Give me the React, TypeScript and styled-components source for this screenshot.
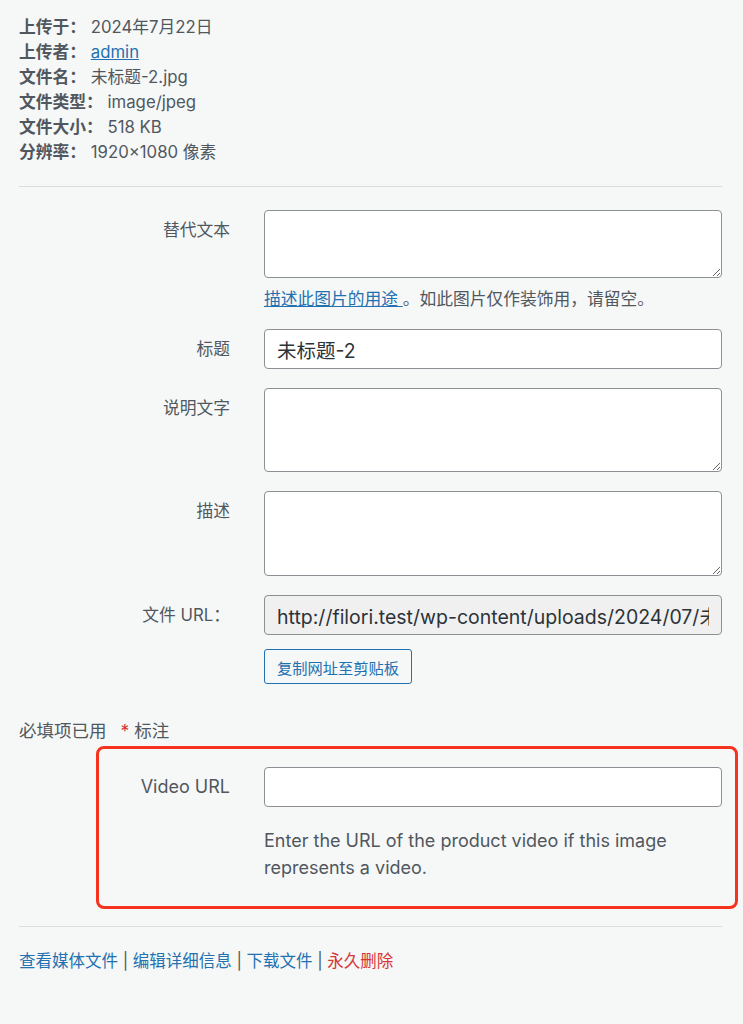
import styled, { createGlobalStyle } from "styled-components";

const GlobalStyle = createGlobalStyle`
  html, body {
    margin: 0;
    padding: 0;
    background: #f6f7f7;
  }
  body {
    font-family: Inter, "Noto Sans CJK SC", sans-serif;
    color: #50575e;
  }
`;

const Page = styled.div`
  padding: 15px 21px 40px 19px;
`;

const MetaList = styled.div`
  display: flex;
  flex-direction: column;
  font-size: 16.75px;
  line-height: 25px;
  color: #50575e;
`;

const MetaLabel = styled.strong`
  font-weight: 600;
  color: #50575e;
`;

const Link = styled.a<{ $danger?: boolean }>`
  color: ${(p) => (p.$danger ? "#d63638" : "#2271b1")};
  text-decoration: underline;
`;

const Divider = styled.hr`
  border: 0;
  border-top: 1px solid #dcdcde;
  margin: 21px 0 0;
`;

const Fields = styled.div`
  display: flex;
  flex-direction: column;
  gap: 19px;
  padding-top: 23px;
`;

const Row = styled.div<{ $labelWidth?: number }>`
  display: grid;
  grid-template-columns: ${(p) => p.$labelWidth ?? 211}px 458px;
  column-gap: 34px;
  align-items: start;
`;

const Label = styled.label<{ $size?: number }>`
  text-align: right;
  font-size: ${(p) => p.$size ?? 16.75}px;
  line-height: 20px;
  padding-top: 10px;
  color: #50575e;
`;

const Control = styled.div`
  display: flex;
  flex-direction: column;
`;

const TextArea = styled.textarea<{ $h: number }>`
  box-sizing: border-box;
  width: 100%;
  height: ${(p) => p.$h}px;
  margin: 0;
  border: 1px solid #8c8f94;
  border-radius: 4px;
  background: #fff;
  font: inherit;
  resize: vertical;
  display: block;
`;

const TextInput = styled.input<{ $readOnly?: boolean }>`
  box-sizing: border-box;
  width: 100%;
  height: 40px;
  margin: 0;
  padding: 0 12px;
  border: 1px solid #8c8f94;
  border-radius: 4px;
  background: ${(p) => (p.$readOnly ? "#f0f0f1" : "#fff")};
  color: #2c3338;
  font-family: Inter, "Noto Sans CJK SC", sans-serif;
  font-size: 19.5px;
`;

const Help = styled.p<{ $mt?: number; $lh?: number; $size?: number }>`
  margin: ${(p) => p.$mt ?? 10}px 0 0;
  font-size: ${(p) => p.$size ?? 16.75}px;
  line-height: ${(p) => p.$lh ?? 22}px;
  color: #50575e;
`;

const CopyButton = styled.button`
  align-self: flex-start;
  margin-top: 14px;
  height: 35px;
  padding: 0 12px;
  border: 1px solid #2271b1;
  border-radius: 3px;
  background: #f6f7f7;
  color: #2271b1;
  font-family: Inter, "Noto Sans CJK SC", sans-serif;
  font-size: 15.25px;
`;

const Required = styled.p`
  margin: 36px 0 0;
  font-size: 17.5px;
  line-height: 22px;
  color: #50575e;
`;

const Star = styled.span`
  color: #d63638;
  margin: 0 5px 0 14px;
`;

const Highlight = styled.div`
  margin: 4px -16px 0 77px;
  padding: 18px 13px 25px 0;
  border: 3px solid #f5331f;
  border-radius: 8px;
`;

const Footer = styled.div`
  margin-top: 17px;
  padding-top: 23px;
  border-top: 1px solid #dcdcde;
  font-size: 16.5px;
  line-height: 22px;
  color: #50575e;
  a {
    text-decoration: none;
  }
`;

const meta: [string, string, boolean?][] = [
  ["上传于：", "2024年7月22日"],
  ["上传者：", "admin", true],
  ["文件名：", "未标题-2.jpg"],
  ["文件类型：", "image/jpeg"],
  ["文件大小：", "518 KB"],
  ["分辨率：", "1920×1080 像素"],
];

export default function App() {
  return (
    <Page>
      <GlobalStyle />
      <MetaList>
        {meta.map(([k, v, link]) => (
          <div key={k}>
            <MetaLabel>{k}</MetaLabel> {link ? <Link href="#">{v}</Link> : v}
          </div>
        ))}
      </MetaList>
      <Divider />
      <Fields>
        <Row>
          <Label>替代文本</Label>
          <Control>
            <TextArea $h={68} />
            <Help>
              <Link href="#">描述此图片的用途 </Link>。如此图片仅作装饰用，请留空。
            </Help>
          </Control>
        </Row>
        <Row>
          <Label>标题</Label>
          <TextInput defaultValue="未标题-2" />
        </Row>
        <Row>
          <Label>说明文字</Label>
          <TextArea $h={84} />
        </Row>
        <Row>
          <Label>描述</Label>
          <TextArea $h={85} />
        </Row>
        <Row>
          <Label>文件 URL：</Label>
          <Control>
            <TextInput
              $readOnly
              readOnly
              defaultValue="http://filori.test/wp-content/uploads/2024/07/未标题-2.jpg"
            />
            <CopyButton>复制网址至剪贴板</CopyButton>
          </Control>
        </Row>
      </Fields>
      <Required>
        必填项已用<Star>*</Star>标注
      </Required>
      <Highlight>
        <Row $labelWidth={131}>
          <Label $size={18}>Video URL</Label>
          <Control>
            <TextInput />
            <Help $mt={20} $lh={27} $size={18}>
              Enter the URL of the product video if this image represents a
              video.
            </Help>
          </Control>
        </Row>
      </Highlight>
      <Footer>
        <Link href="#">查看媒体文件</Link> | <Link href="#">编辑详细信息</Link> |{" "}
        <Link href="#">下载文件</Link> | <Link href="#" $danger>永久删除</Link>
      </Footer>
    </Page>
  );
}
